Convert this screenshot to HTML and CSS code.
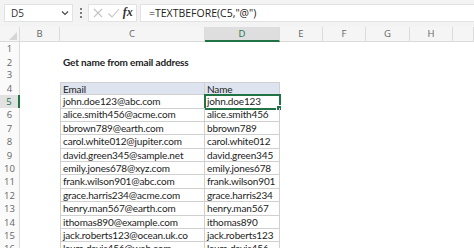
FILE: index.html
```html
<!doctype html>
<html>
<head>
<meta charset="utf-8">
<title>TEXTBEFORE</title>
<link rel="stylesheet" href="styles.css">
</head>
<body>
<div class="bar">
  <div class="namebox">D5
    <svg class="chev" width="8" height="6" viewBox="0 0 8 6"><path d="M1 1.5 L4 4.5 L7 1.5" fill="none" stroke="#444" stroke-width="1.1"/></svg>
  </div>
  <div class="dots"><i></i><i></i><i></i></div>
  <div class="btns">
    <svg width="12" height="12" viewBox="0 0 12 12"><path d="M2 2 L10 10 M10 2 L2 10" stroke="#c4c4c4" stroke-width="1.1"/></svg>
    <svg width="13" height="12" viewBox="0 0 13 12"><path d="M1.5 6.5 L5 10 L12 2" fill="none" stroke="#c4c4c4" stroke-width="1.1"/></svg>
    <span class="fx">fx</span>
  </div>
  <div class="formula">=TEXTBEFORE(C5,"@")</div>
</div>

<div class="sheet">
  <div class="row head">
    <div class="corner"><svg width="8" height="8" viewBox="0 0 8 8"><path d="M8 0 L8 8 L0 8 Z" fill="#d6d6d6"/></svg></div>
    <div>B</div><div>C</div><div class="sel">D</div><div>E</div><div>F</div><div>G</div><div>H</div><div></div>
  </div>
  <div class="row r1"><div class="num">1</div></div>
  <div class="row r2"><div class="num">2</div><div></div><div class="title">Get name from email address</div></div>
  <div class="row r3"><div class="num">3</div></div>
  <div class="row r4"><div class="num">4</div><div></div><div class="cell th">Email</div><div class="cell th">Name</div></div>
  <div class="row"><div class="num on">5</div><div></div><div class="cell">john.doe123@abc.com</div><div class="cell active">john.doe123<b class="handle"></b></div></div>
  <div class="row"><div class="num">6</div><div></div><div class="cell">alice.smith456@acme.com</div><div class="cell">alice.smith456</div></div>
  <div class="row"><div class="num">7</div><div></div><div class="cell">bbrown789@earth.com</div><div class="cell">bbrown789</div></div>
  <div class="row"><div class="num">8</div><div></div><div class="cell">carol.white012@jupiter.com</div><div class="cell">carol.white012</div></div>
  <div class="row"><div class="num">9</div><div></div><div class="cell">david.green345@sample.net</div><div class="cell">david.green345</div></div>
  <div class="row"><div class="num">10</div><div></div><div class="cell">emily.jones678@xyz.com</div><div class="cell">emily.jones678</div></div>
  <div class="row"><div class="num">11</div><div></div><div class="cell">frank.wilson901@abc.com</div><div class="cell">frank.wilson901</div></div>
  <div class="row"><div class="num">12</div><div></div><div class="cell">grace.harris234@acme.com</div><div class="cell">grace.harris234</div></div>
  <div class="row"><div class="num">13</div><div></div><div class="cell">henry.man567@earth.com</div><div class="cell">henry.man567</div></div>
  <div class="row"><div class="num">14</div><div></div><div class="cell">ithomas890@example.com</div><div class="cell">ithomas890</div></div>
  <div class="row"><div class="num">15</div><div></div><div class="cell">jack.roberts123@ocean.uk.co</div><div class="cell">jack.roberts123</div></div>
  <div class="row"><div class="num">16</div><div></div><div class="cell">laura.davis456@web.com</div><div class="cell">laura.davis456</div></div>
</div>
</body>
</html>
```

FILE: styles.css
```css
body {
	margin: 0;
	background: #fff;
	font-family: "Lato", "Liberation Sans", sans-serif;
	overflow: hidden;
}
.bar {
	display: flex;
	align-items: center;
	height: 27px;
	padding: 0 0 2px 4px;
	background: #f3f3f3;
	box-sizing: border-box;
}
.namebox {
	width: 69px;
	height: 18px;
	box-sizing: border-box;
	background: #fff;
	border: 1px solid #e2e2e2;
	display: flex;
	align-items: center;
	justify-content: space-between;
	padding: 0 3px 0 6px;
	font-family: "Open Sans", sans-serif;
	font-size: 10px;
	color: #333;
}
.dots {
	width: 15px;
	display: flex;
	flex-direction: column;
	align-items: center;
	gap: 2px;
}
.dots i {
	width: 2px;
	height: 2px;
	background: #555;
	border-radius: 1px;
}
.btns {
	width: 49px;
	height: 18px;
	box-sizing: border-box;
	background: #fff;
	border: 1px solid #e2e2e2;
	display: flex;
	align-items: center;
	justify-content: space-around;
	padding: 0 2px;
}
.fx {
	font-family: "Liberation Serif", serif;
	font-style: italic;
	font-weight: bold;
	font-size: 12px;
	color: #333;
}
.formula {
	flex: 1;
	margin-left: 3px;
	height: 18px;
	box-sizing: border-box;
	background: #fff;
	border: 1px solid #e2e2e2;
	border-right: 0;
	padding-left: 8px;
	font-family: "Open Sans", sans-serif;
	font-size: 10.5px;
	line-height: 16px;
	color: #222;
}
.row {
	display: grid;
	grid-template-columns: 20px 40px 145px 75px 43px 43px 44px 43px 1fr;
	height: 13.4px;
	font-size: 10px;
	letter-spacing: -0.15px;
	color: #222;
}
.head {
	height: 14px;
	background: #f5f5f5;
	border-bottom: 1px solid #dadada;
	font-family: "Open Sans", sans-serif;
	font-size: 9.5px;
	letter-spacing: 0;
	color: #666;
}
.head div {
	text-align: center;
	line-height: 14px;
	border-right: 1px solid #dcdcdc;
}
.head .corner {
	display: flex;
	align-items: flex-end;
	justify-content: flex-end;
	padding: 0 2px 2px 0;
}
.head .sel {
	background: #dedede;
	color: #217346;
	border-bottom: 2px solid #217346;
	height: 13px;
	line-height: 14px;
}
.r1 { height: 14px; }
.r2 { height: 12px; }
.r3 { height: 14px; }
.r4 { height: 13px; }
.num {
	border-right: 1px solid #dadada;
	font-family: "Open Sans", sans-serif;
	font-size: 9.5px;
	letter-spacing: 0;
	color: #666;
	text-align: center;
	line-height: 13px;
	background: #fafafa;
}
.num.on {
	background: #e2e2e2;
	color: #217346;
	border-right: 2px solid #217346;
}
.title {
	font-weight: bold;
	padding-left: 3px;
	line-height: 12px;
	white-space: nowrap;
}
.cell {
	border-right: 1px solid #d0d0d0;
	border-bottom: 1px solid #d0d0d0;
	padding-left: 2px;
	line-height: 13px;
	white-space: nowrap;
	overflow: hidden;
	position: relative;
}
.row .cell:nth-child(3) {
	border-left: 1px solid #d0d0d0;
}
.th {
	background: #dde4ef;
	border-top: 1px solid #d0d0d0;
	line-height: 12px;
}
.active {
	overflow: visible;
	outline: 2px solid #217346;
	outline-offset: -1px;
}
.handle {
	position: absolute;
	right: -3px;
	bottom: -3px;
	width: 4px;
	height: 4px;
	background: #217346;
	border: 1px solid #fff;
}
```
